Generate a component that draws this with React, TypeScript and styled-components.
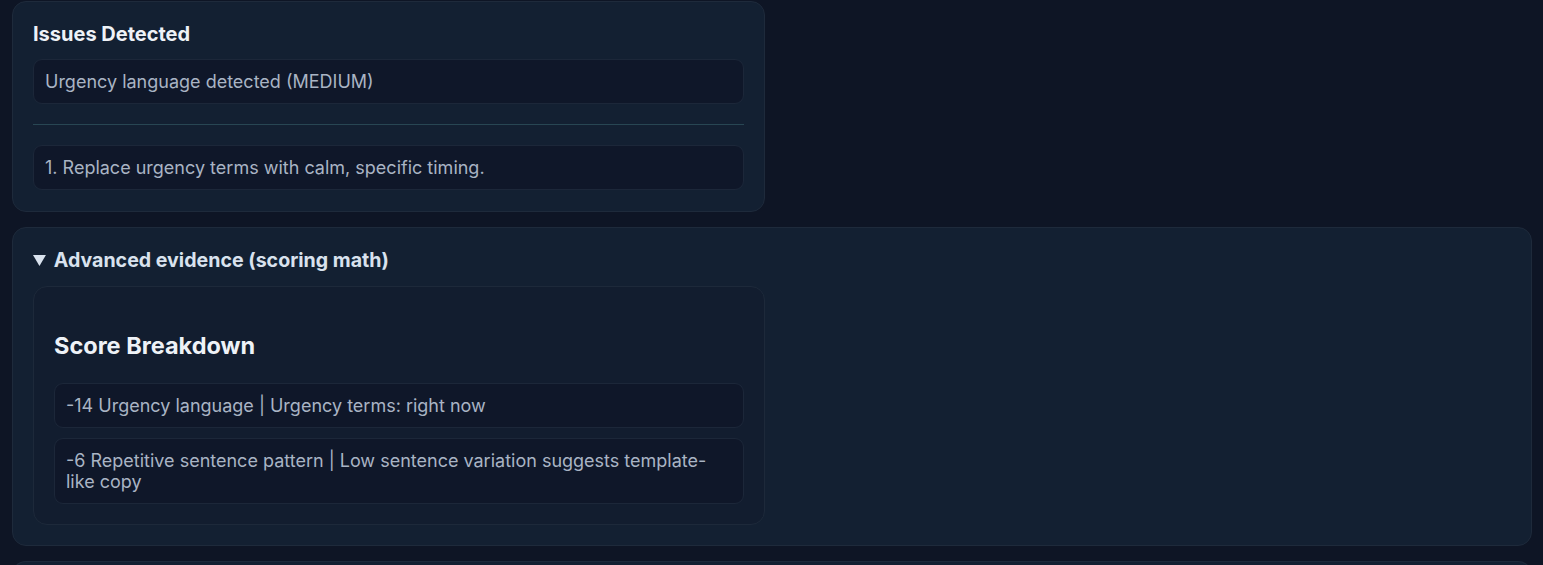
import styled, { createGlobalStyle } from 'styled-components';

const GlobalStyle = createGlobalStyle`
  html, body {
    margin: 0;
    padding: 0;
    background: #0e1525;
    font-family: Inter, "Noto Sans", "Liberation Sans", sans-serif;
  }
  * {
    box-sizing: border-box;
  }
`;

const Page = styled.div`
  display: flex;
  flex-direction: column;
  gap: 15px;
  padding: 1px 11px 0 12px;
`;

const Grid = styled.div`
  display: grid;
  grid-template-columns: 1fr 1fr;
  gap: 14px;
`;

const Card = styled.section`
  background: #132032;
  border: 1px solid #1e2a3b;
  border-radius: 14px;
  padding: 18px 20px 21px;
`;

const CardTitle = styled.h3`
  margin: 0 0 11px;
  font-size: 20px;
  line-height: 28px;
  font-weight: 700;
  color: #eef2f7;
`;

const List = styled.div`
  display: flex;
  flex-direction: column;
  gap: 10px;
`;

const Item = styled.div`
  background: #0f1729;
  border: 1px solid #1c2739;
  border-radius: 9px;
  padding: 11px 11px;
  font-size: 18px;
  line-height: 21px;
  color: #a9b4c4;
`;

const Divider = styled.hr`
  margin: 20px 0 20px;
  border: none;
  border-top: 1px solid #284653;
`;

const Details = styled.details`
  background: #132032;
  border: 1px solid #1e2a3b;
  border-radius: 14px;
  padding: 20px;
`;

const Summary = styled.summary`
  font-size: 19.6px;
  line-height: 24px;
  font-weight: 700;
  color: #d9e2ee;
  cursor: pointer;
  margin-bottom: 14px;
`;

const InnerCard = styled.div`
  background: #121d2f;
  border: 1px solid #1d293a;
  border-radius: 14px;
  padding: 44px 20px 20px;
`;

const SectionTitle = styled.h2`
  margin: 0 0 22px;
  font-size: 23.5px;
  line-height: 30px;
  font-weight: 700;
  color: #eef2f7;
`;

const NextCard = styled.div`
  height: 20px;
  background: #132032;
  border: 1px solid #1e2a3b;
  border-bottom: none;
  border-radius: 14px 14px 0 0;
`;

export default function App() {
  return (
    <>
      <GlobalStyle />
      <Page>
        <Grid>
          <Card>
            <CardTitle>Issues Detected</CardTitle>
            <List>
              <Item>Urgency language detected (MEDIUM)</Item>
            </List>
            <Divider />
            <List>
              <Item>1. Replace urgency terms with calm, specific timing.</Item>
            </List>
          </Card>
        </Grid>
        <Details open>
          <Summary>Advanced evidence (scoring math)</Summary>
          <Grid>
            <InnerCard>
              <SectionTitle>Score Breakdown</SectionTitle>
              <List>
                <Item>-14 Urgency language | Urgency terms: right now</Item>
                <Item>-6 Repetitive sentence pattern | Low sentence variation suggests template-like copy</Item>
              </List>
            </InnerCard>
          </Grid>
        </Details>
        <NextCard />
      </Page>
    </>
  );
}
